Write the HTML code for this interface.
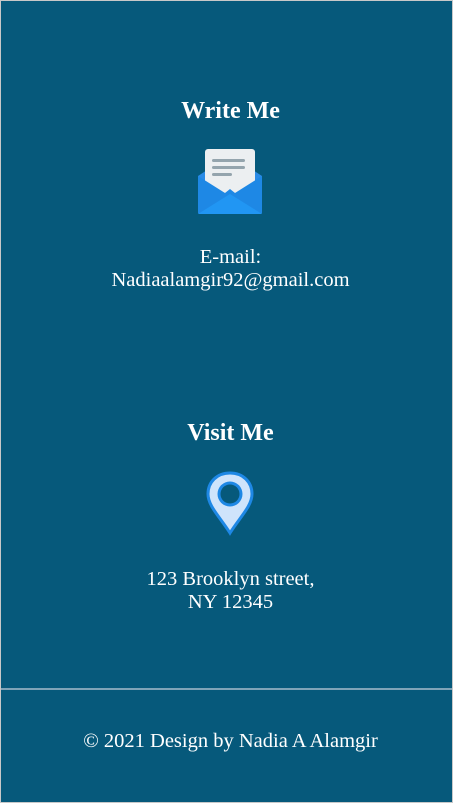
<!DOCTYPE html>
<html><head><meta charset="utf-8"><style>
html,body{margin:0;padding:0;}
body{width:453px;height:803px;overflow:hidden;background:#06597b;font-family:"Liberation Serif",serif;color:#fff;position:relative;}
.frame{position:absolute;left:0;top:0;width:451px;height:801px;border:1px solid #c8c8c8;}
.t{position:absolute;left:4px;width:453px;text-align:center;}
h2{margin:0;font-size:24px;font-weight:bold;}
.p{font-size:20.5px;line-height:23px;}
.line{position:absolute;left:1px;width:451px;top:688px;height:2px;background:#7fa4b8;}
</style></head><body>
<div class="frame"></div>
<div class="t" style="top:98px"><h2>Write Me</h2></div>
<svg style="position:absolute;left:198px;top:149px" width="64" height="66" viewBox="0 0 64 66">
<path d="M0 27 L32 6 L64 27 L64 63 Q64 65 62 65 L2 65 Q0 65 0 63Z" fill="#2a8be6"/>
<rect x="7" y="0" width="50" height="44" rx="3" fill="#eceff1"/>
<rect x="14" y="10" width="33" height="3" rx="1.5" fill="#94a4ad"/>
<rect x="14" y="17" width="33" height="3" rx="1.5" fill="#94a4ad"/>
<rect x="14" y="24" width="20" height="3" rx="1.5" fill="#94a4ad"/>
<path d="M0 27 L27 44 L32 40 L37 44 L64 27 L64 63 Q64 65 62 65 L2 65 Q0 65 0 63Z" fill="#1e88e5"/>
<path d="M0 65 L32 45 L64 65Z" fill="#2196f3"/>
</svg>
<div class="t p" style="top:246px">E-mail:<br>Nadiaalamgir92@gmail.com</div>
<div class="t" style="top:420px"><h2>Visit Me</h2></div>
<svg style="position:absolute;left:206px;top:471px" width="48" height="65" viewBox="0 0 48 65">
<path d="M24 2 C11 2 2 11 2 23 C2 35 14 46 24 62 C34 46 46 35 46 23 C46 11 37 2 24 2Z" fill="#cfe4fb" stroke="#1e88e5" stroke-width="3"/>
<circle cx="24" cy="23" r="12.5" fill="#1e88e5"/>
<circle cx="24" cy="23" r="9.5" fill="#06597b"/>
</svg>
<div class="t p" style="top:568px">123 Brooklyn street,<br>NY 12345</div>
<div class="line"></div>
<div class="t p" style="top:730px">© 2021 Design by Nadia A Alamgir</div>
</body></html>
